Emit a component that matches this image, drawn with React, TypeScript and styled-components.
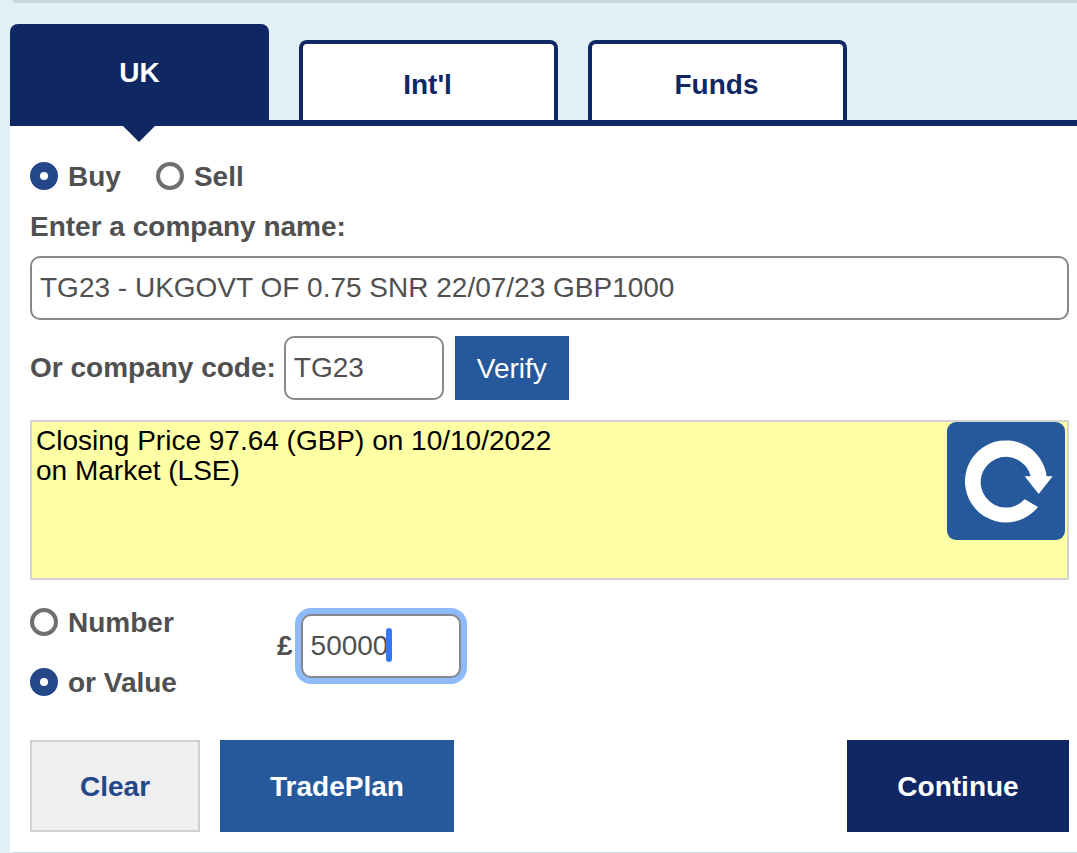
import React, { useState } from "react";
import styled, { createGlobalStyle, css } from "styled-components";

const navy = "#0f2763";
const blue = "#25599c";
const royal = "#24478a";
const grey = "#505050";

const GlobalStyle = createGlobalStyle`
  *, *::before, *::after { box-sizing: border-box; }
  body {
    margin: 0;
    background: #e2eff6;
    color: ${grey};
    font: 28px/32px "Liberation Sans", Arial, sans-serif;
  }
  button, input { font: inherit; }
`;

const Page = styled.main`
  padding-left: 10px;
`;

const TopRule = styled.div`
  height: 3px;
  margin-left: 3px;
  background: #cad6de;
`;

const BottomRule = styled.div`
  height: 1px;
  margin-left: 3px;
  background: #c5d9e0;
`;

const Tabs = styled.nav`
  display: flex;
  align-items: flex-end;
  gap: 30px;
  padding-top: 21px;
  border-bottom: 6px solid ${navy};
`;

const Tab = styled.button<{ $active: boolean }>`
  position: relative;
  flex: 0 1 259px;
  height: 80px;
  padding: 6px 2px 0 0;
  border: 4px solid ${navy};
  border-bottom: 0;
  border-radius: 8px 8px 0 0;
  background: #fff;
  color: ${navy};
  font-weight: bold;
  ${(p) =>
    p.$active &&
    css`
      height: 96px;
      padding: 0 0 2px;
      background: ${navy};
      color: #fff;

      &::after {
        content: "";
        position: absolute;
        top: 98px;
        left: 50%;
        margin-left: -17px;
        border: 16px solid transparent;
        border-top-color: ${navy};
        border-bottom: 0;
      }
    `}
`;

const Panel = styled.form`
  padding: 35px 8px 20px 20px;
  background: #fff;
`;

const RadioRow = styled.div`
  display: flex;
  gap: 35px;
`;

const RadioLabel = styled.label`
  display: flex;
  align-items: flex-start;
  gap: 10px;
  font-weight: bold;
`;

const Radio = styled.input`
  appearance: none;
  width: 28px;
  height: 28px;
  margin: 1px 0 0;
  border: 4px solid #6f6f6f;
  border-radius: 50%;
  background: #fff;

  &:checked {
    border: 10px solid ${royal};
  }
`;

const FieldLabel = styled.label`
  display: block;
  font-weight: bold;
`;

const NameLabel = styled(FieldLabel)`
  margin: 18px 0 13px;
`;

const TextBox = styled.input`
  display: block;
  width: 160px;
  height: 64px;
  padding: 0 8px;
  border: 2px solid #88878c;
  border-radius: 10px;
  background: #fff;
  color: ${grey};
  outline: none;
`;

const WideTextBox = styled(TextBox)`
  width: 100%;
`;

const AmountBox = styled(TextBox)`
  box-shadow: 0 0 0 6px #8fbafa;
`;

const CodeRow = styled.div`
  display: flex;
  align-items: center;
  margin: 16px 0 20px;
  gap: 8px;
`;

const Verify = styled.button`
  height: 64px;
  margin-left: 3px;
  padding: 2px 22px 0;
  border: 0;
  background: ${blue};
  color: #fff;
`;

const PriceBox = styled.section`
  display: flex;
  justify-content: space-between;
  align-items: flex-start;
  min-height: 160px;
  padding-right: 2px;
  border: 2px solid #d3d3d3;
  background: #ffffa5;
`;

const PriceText = styled.p`
  margin: 0;
  padding: 4px;
  color: #000;
  line-height: 30px;
`;

const Refresh = styled.button`
  flex: none;
  width: 118px;
  height: 118px;
  padding: 0;
  border: 0;
  border-radius: 9px;
  background: ${blue};

  svg {
    display: block;
    width: 100%;
    height: 100%;
  }
`;

const Quantity = styled.div`
  display: flex;
  align-items: flex-start;
  margin-top: 27px;
`;

const QuantityModes = styled.div`
  display: flex;
  flex-direction: column;
  gap: 28px;
  width: 247px;
`;

const Amount = styled.div`
  display: flex;
  align-items: center;
  gap: 8px;
  padding-top: 7px;
`;

const AmountField = styled.div`
  position: relative;
`;

const Caret = styled.span`
  position: absolute;
  top: 14px;
  left: 85px;
  width: 6px;
  height: 34px;
  border-radius: 3px;
  background: #3578f6;
`;

const Actions = styled.div`
  display: flex;
  gap: 20px;
  margin-top: 41px;
`;

const Action = styled.button<{ $bg: string; $color?: string; $border?: string }>`
  height: 92px;
  padding: 2px 48px 0;
  border: 2px solid ${(p) => p.$border ?? p.$bg};
  background: ${(p) => p.$bg};
  color: ${(p) => p.$color ?? "#fff"};
  font-weight: bold;

  &:last-child {
    min-width: 222px;
    margin-left: auto;
  }
`;

const markets = ["UK", "Int'l", "Funds"];

export default function App() {
  const [market, setMarket] = useState("UK");
  const [name, setName] = useState("TG23 - UKGOVT OF 0.75 SNR 22/07/23 GBP1000");
  const [code, setCode] = useState("TG23");
  const [amount, setAmount] = useState("50000");

  return (
    <>
      <GlobalStyle />
      <Page>
        <TopRule />
        <Tabs>
          {markets.map((m) => (
            <Tab key={m} type="button" $active={m === market} onClick={() => setMarket(m)}>
              {m}
            </Tab>
          ))}
        </Tabs>
        <Panel onSubmit={(e) => e.preventDefault()}>
          <RadioRow>
            <RadioLabel>
              <Radio type="radio" name="side" defaultChecked />
              Buy
            </RadioLabel>
            <RadioLabel>
              <Radio type="radio" name="side" />
              Sell
            </RadioLabel>
          </RadioRow>

          <NameLabel htmlFor="company">Enter a company name:</NameLabel>
          <WideTextBox id="company" value={name} onChange={(e) => setName(e.target.value)} />

          <CodeRow>
            <FieldLabel htmlFor="code">Or company code:</FieldLabel>
            <TextBox id="code" value={code} onChange={(e) => setCode(e.target.value)} />
            <Verify type="button">Verify</Verify>
          </CodeRow>

          <PriceBox>
            <PriceText>
              Closing Price 97.64 (GBP) on 10/10/2022
              <br />
              on Market (LSE)
            </PriceText>
            <Refresh type="button" aria-label="Refresh price">
              <svg viewBox="0 0 354 354" fill="#fff" aria-hidden="true">
                <path d="M273 255A123 123 0 1 1 299 163H317L275 216L233 163H251A76 76 0 1 0 233 232Z" />
              </svg>
            </Refresh>
          </PriceBox>

          <Quantity>
            <QuantityModes>
              <RadioLabel>
                <Radio type="radio" name="mode" />
                Number
              </RadioLabel>
              <RadioLabel>
                <Radio type="radio" name="mode" defaultChecked />
                or Value
              </RadioLabel>
            </QuantityModes>
            <Amount>
              <FieldLabel htmlFor="amount">£</FieldLabel>
              <AmountField>
                <AmountBox id="amount" value={amount} onChange={(e) => setAmount(e.target.value)} />
                <Caret />
              </AmountField>
            </Amount>
          </Quantity>

          <Actions>
            <Action type="reset" $bg="#efefef" $color={royal} $border="#d0d0d0">
              Clear
            </Action>
            <Action type="button" $bg={blue}>
              TradePlan
            </Action>
            <Action type="submit" $bg={navy}>
              Continue
            </Action>
          </Actions>
        </Panel>
        <BottomRule />
      </Page>
    </>
  );
}
